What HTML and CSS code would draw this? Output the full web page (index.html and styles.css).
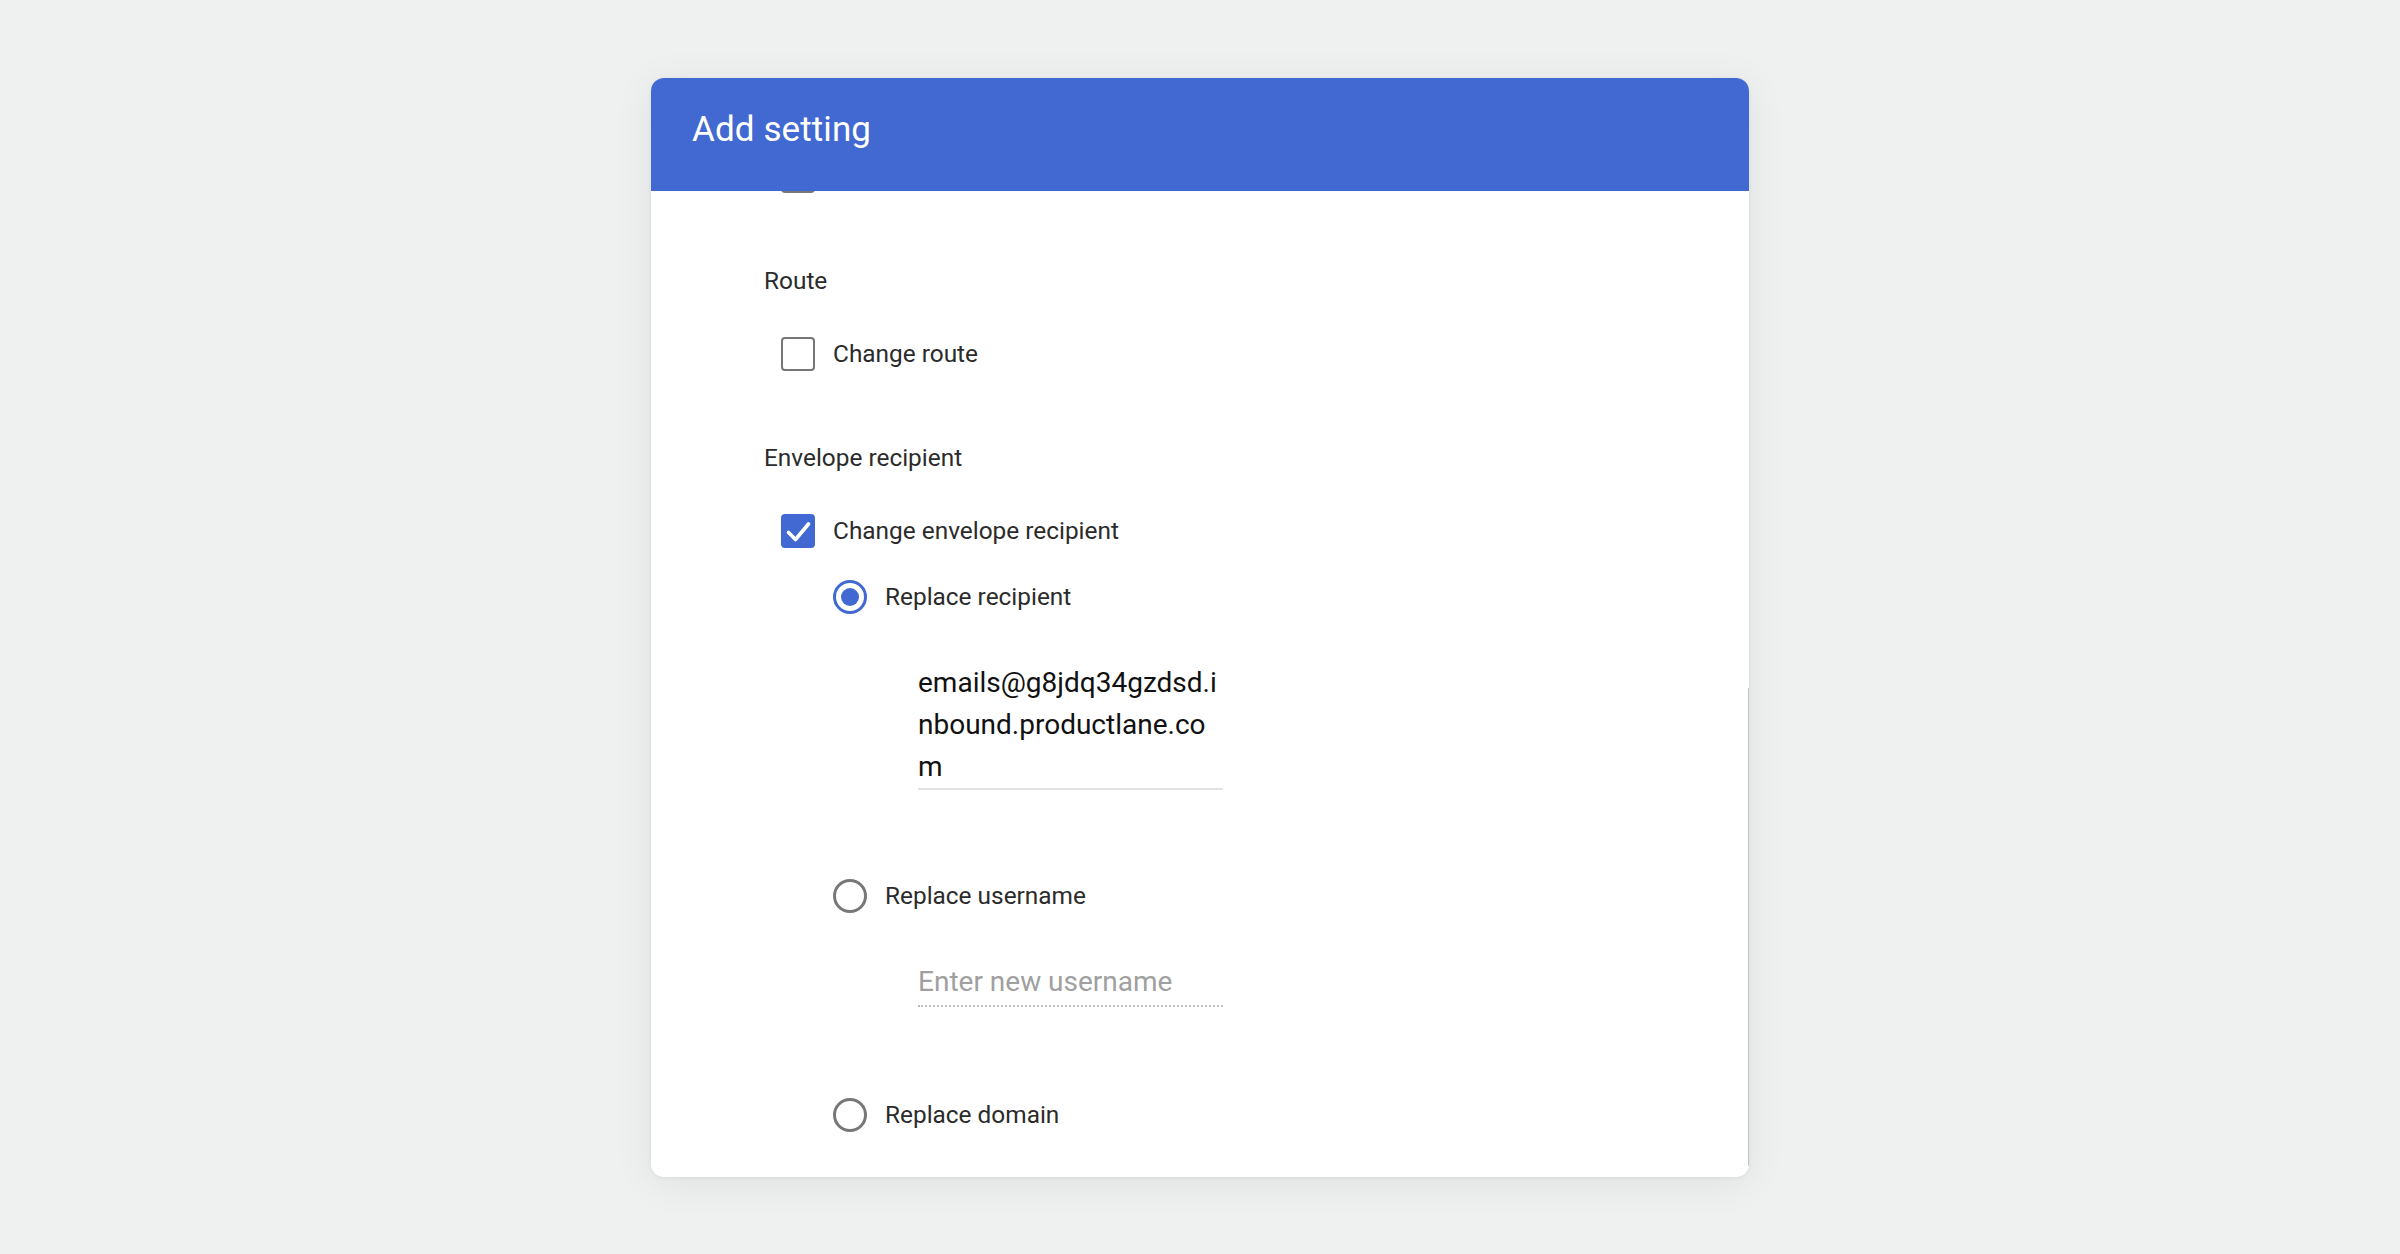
FILE: index.html
```html
<!DOCTYPE html>
<html lang="en">
<head>
<meta charset="utf-8">
<title>Add setting</title>
<link rel="stylesheet" href="styles.css">
</head>
<body>
<div class="page">
  <div class="card">
    <header class="card-head">
      <h1 class="card-title">Add setting</h1>
    </header>
    <div class="card-body">
      <div class="scroll">
        <div class="row peek"><span class="checkbox"></span></div>

        <section class="group">
          <div class="group-label">Route</div>
          <label class="row">
            <span class="checkbox"></span>
            <span class="row-text">Change route</span>
          </label>
        </section>

        <section class="group">
          <div class="group-label">Envelope recipient</div>
          <label class="row">
            <span class="checkbox checked">
              <svg viewBox="0 0 34 34" width="34" height="34"><path d="M7.5 18.5 L14.5 25.5 L27.5 10" fill="none" stroke="#fff" stroke-width="3.6" stroke-linecap="round" stroke-linejoin="round"/></svg>
            </span>
            <span class="row-text">Change envelope recipient</span>
          </label>

          <div class="options">
            <label class="row">
              <span class="radio checked"></span>
              <span class="row-text">Replace recipient</span>
            </label>
            <div class="field filled">emails@g8jdq34gzdsd.i<br>nbound.productlane.co<br>m</div>

            <label class="row spaced">
              <span class="radio"></span>
              <span class="row-text">Replace username</span>
            </label>
            <div class="field empty">Enter new username</div>

            <label class="row spaced last">
              <span class="radio"></span>
              <span class="row-text">Replace domain</span>
            </label>
          </div>
        </section>
      </div>
      <div class="scroll-thumb"></div>
    </div>
  </div>
</div>
</body>
</html>
```

FILE: styles.css
```css
html, body {
  margin: 0;
  padding: 0;
  background: #eff0f0;
  font-family: Roboto, "Liberation Sans", Arial, sans-serif;
}

.page {
  display: flex;
  justify-content: center;
  padding-top: 78px;
  height: 1254px;
  box-sizing: border-box;
}

.card {
  width: 1098px;
  height: 1099px;
  background: #fff;
  border-radius: 13px;
  box-shadow: 0 6px 40px rgba(0, 0, 0, 0.07), 0 1px 4px rgba(0, 0, 0, 0.05);
  display: flex;
  flex-direction: column;
  overflow: hidden;
}

.card-head {
  background: #4169d1;
  height: 113px;
  box-sizing: border-box;
  padding: 31px 0 0 41px;
  flex: none;
  position: relative;
  z-index: 1;
}

.card-title {
  margin: 0;
  font-size: 35px;
  line-height: 42px;
  font-weight: 400;
  color: #fff;
  letter-spacing: 0.1px;
}

.card-body {
  flex: 1;
  position: relative;
  overflow: hidden;
}

.scroll {
  padding-left: 113px;
  padding-top: 1px;
}

.scroll-thumb {
  position: absolute;
  right: 0;
  top: 497px;
  width: 1px;
  height: 478px;
  background: #c4c4c4;
}

.peek {
  margin-top: -33px;
  padding-left: 17px;
}

.group {
  margin-top: 71px;
}

.group + .group {
  margin-top: 69.5px;
}

.group-label {
  font-size: 24.4px;
  line-height: 34px;
  color: #2b2b2b;
  margin-bottom: 39px;
}

.row {
  display: flex;
  align-items: center;
  height: 34px;
  padding-left: 17px;
  cursor: pointer;
}

.row-text {
  font-size: 24.4px;
  line-height: 34px;
  color: #2b2b2b;
  margin-left: 18px;
}

.checkbox {
  width: 34px;
  height: 34px;
  box-sizing: border-box;
  border: 2.8px solid #777;
  border-radius: 4px;
  flex: none;
  display: block;
}

.checkbox.checked {
  border: none;
  background: #4169d1;
}

.checkbox svg {
  display: block;
}

.options {
  margin-top: 32.5px;
  padding-left: 69px;
}

.radio {
  width: 34px;
  height: 34px;
  box-sizing: border-box;
  border: 3px solid #777;
  border-radius: 50%;
  flex: none;
  position: relative;
}

.radio.checked {
  border-color: #4169d1;
}

.radio.checked::after {
  content: "";
  position: absolute;
  left: 5px;
  top: 5px;
  width: 18px;
  height: 18px;
  border-radius: 50%;
  background: #4169d1;
}

.options .row {
  padding-left: 0;
}

.row.spaced {
  margin-top: 89px;
}

.row.spaced.last {
  margin-top: 90.5px;
}

.field {
  margin-top: 48px;
  margin-left: 85px;
  width: 305px;
  font-size: 28px;
  line-height: 42px;
  white-space: nowrap;
}

.field.filled {
  color: #111;
  border-bottom: 2px solid #e2e2e2;
}

.field.empty {
  color: #a0a0a0;
  padding-bottom: 2px;
  border-bottom: 2px dotted #bdbdbd;
}
```
